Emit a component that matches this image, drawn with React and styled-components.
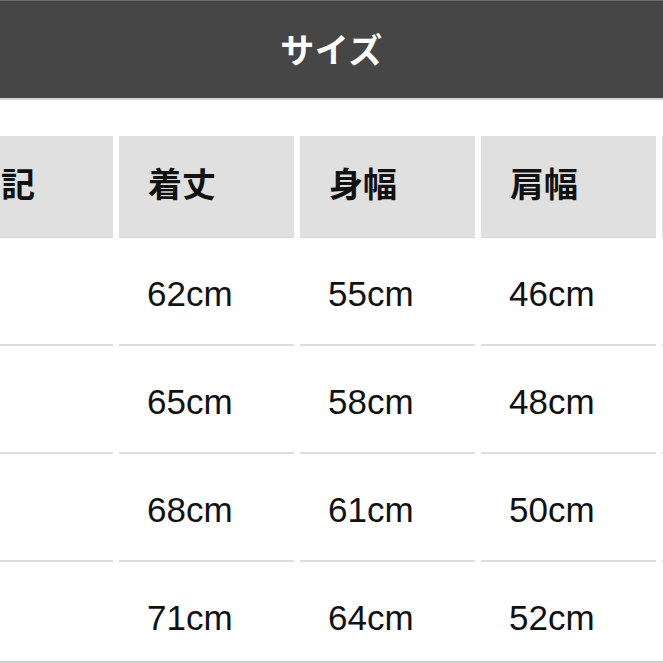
import styled, { createGlobalStyle } from "styled-components";

const GlobalStyle = createGlobalStyle`
  html, body {
    margin: 0;
    padding: 0;
    background: #ffffff;
  }
  body {
    font-family: "Liberation Sans", "Noto Sans CJK JP", sans-serif;
    color: #111111;
  }
`;

const columns = ["表記", "着丈", "身幅", "肩幅", "袖丈"];

const rows = [
    ["S", "62cm", "55cm", "46cm", "60cm"],
    ["M", "65cm", "58cm", "48cm", "61cm"],
    ["L", "68cm", "61cm", "50cm", "62cm"],
    ["XL", "71cm", "64cm", "52cm", "63cm"],
];

export default function App() {
    return (
        <>
            <GlobalStyle />
            <Page>
                <TitleBar>サイズ</TitleBar>

                <Table>
                    {columns.map(col => (
                        <HeadCell key={col}>{col}</HeadCell>
                    ))}

                    {rows.map(row => (
                        row.map((value, i) => (
                            <Cell key={row[0] + i} label={i === 0}>{value}</Cell>
                        ))
                    ))}
                </Table>
            </Page>
        </>
    );
}

const Page = styled.div`
    width: 663px;
    height: 663px;
    box-sizing: border-box;
    overflow: hidden;
    border-bottom: 2px solid #cfcfcf;
`

const TitleBar = styled.div`
    height: 100px;
    box-sizing: border-box;
    border-top: 1px solid #6b6b6b;
    border-bottom: 2px solid #d4d4d4;
    background-color: #464646;
    padding-bottom: 3px;

    display: flex;
    align-items: center;
    justify-content: center;

    font-family: "Noto Sans CJK JP", sans-serif;
    font-weight: 700;
    font-size: 34px;
    color: #ffffff;
    letter-spacing: 0.5px;
`

const Table = styled.div`
    display: grid;
    grid-template-columns: repeat(5, 175px);
    grid-template-rows: 102px;
    grid-auto-rows: 108px;
    column-gap: 6px;
    margin-top: 36px;
    margin-left: -62px;
    width: max-content;
`

const HeadCell = styled.div`
    background-color: #e0e0e0;
    border-bottom: 1px solid #d8d8d8;
    box-sizing: border-box;
    padding-left: 29px;
    padding-bottom: 8px;

    display: flex;
    align-items: center;

    font-family: "Noto Sans CJK JP", sans-serif;
    font-weight: 700;
    font-size: 34px;
    color: #111111;
`

const Cell = styled.div`
    box-sizing: border-box;
    border-bottom: 2px solid #dddddd;
    padding-left: ${({ label }) => label ? '14px' : '28px'};
    padding-top: 6px;

    display: flex;
    align-items: center;

    font-family: "Liberation Sans", Arial, sans-serif;
    font-size: 35px;
    color: #111111;
`
